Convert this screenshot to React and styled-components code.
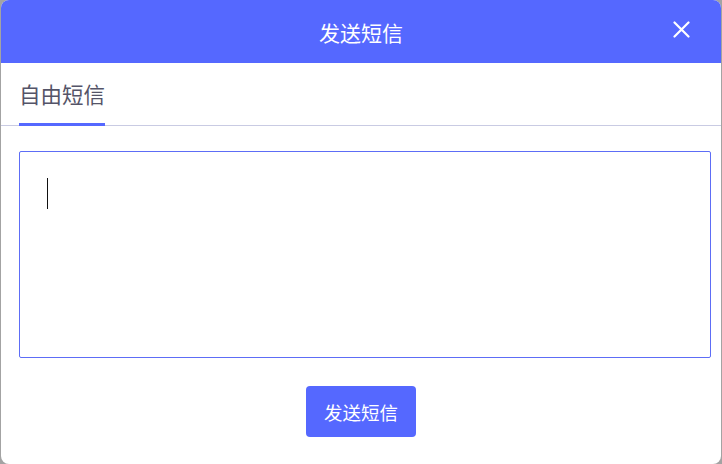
import React from 'react';
import styled, { createGlobalStyle } from 'styled-components';

const GlobalStyle = createGlobalStyle`
  html, body {
    margin: 0;
    padding: 0;
    background: #a3a3a3;
    font-family: "Noto Sans CJK SC", "Noto Sans", sans-serif;
  }
`;

const Dialog = styled.div`
  width: 720px;
  height: 464px;
  margin-left: 1px;
  background: #ffffff;
  border-radius: 8px;
  overflow: hidden;
  display: flex;
  flex-direction: column;
`;

const Header = styled.div`
  height: 63px;
  background: #5568ff;
  display: flex;
  align-items: center;
  justify-content: center;
  position: relative;
  color: #ffffff;
  font-size: 21px;
`;

const Close = styled.button`
  position: absolute;
  right: 31px;
  top: 21px;
  width: 17px;
  height: 17px;
  padding: 0;
  border: none;
  background: transparent;
  cursor: pointer;
  display: flex;
`;

const Tabs = styled.div`
  height: 62px;
  border-bottom: 1px solid #c9cbe3;
  display: flex;
  padding: 0 18px;
`;

const Tab = styled.div`
  display: flex;
  align-items: center;
  font-size: 21.5px;
  color: ${p => (p.$active ? '#545468' : '#888')};
  border-bottom: 3px solid ${p => (p.$active ? '#5568ff' : 'transparent')};
  margin-bottom: -1px;
  padding-top: 1px;
`;

const Body = styled.div`
  padding-top: 25px;
  display: flex;
  flex-direction: column;
`;

const Editor = styled.div`
  box-sizing: border-box;
  height: 207px;
  margin: 0 10px 0 18px;
  border: 1px solid #5d6df6;
  border-radius: 2px;
  padding: 26px 27px;
`;

const Caret = styled.div`
  width: 1px;
  height: 31px;
  background: #111;
`;

const SendButton = styled.button`
  align-self: center;
  margin-top: 28px;
  width: 110px;
  height: 51px;
  border: none;
  border-radius: 4px;
  background: #5568ff;
  color: #ffffff;
  font-family: inherit;
  font-size: 18.5px;
  cursor: pointer;
`;

export default function App() {
  return (
    <>
      <GlobalStyle />
      <Dialog>
        <Header>
          发送短信
          <Close aria-label="关闭">
            <svg width="17" height="17" viewBox="0 0 17 17">
              <path d="M1.5 1.5 L15.5 15.5 M15.5 1.5 L1.5 15.5" stroke="#fff" strokeWidth="2.2" strokeLinecap="round" />
            </svg>
          </Close>
        </Header>
        <Tabs>
          <Tab $active>自由短信</Tab>
        </Tabs>
        <Body>
          <Editor>
            <Caret />
          </Editor>
          <SendButton>发送短信</SendButton>
        </Body>
      </Dialog>
    </>
  );
}
